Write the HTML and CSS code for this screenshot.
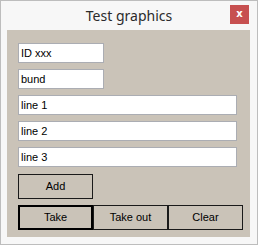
FILE: index.html
```html
<!DOCTYPE html>
<html>
<head>
<meta charset="utf-8">
<link rel="stylesheet" href="styles.css">
</head>
<body>
<div class="window">
  <div class="titlebar">
    <span class="title">Test graphics</span>
    <span class="close">x</span>
  </div>
  <div class="client">
    <div class="field short">ID xxx</div>
    <div class="field short">bund</div>
    <div class="field long">line 1</div>
    <div class="field long">line 2</div>
    <div class="field long">line 3</div>
    <div class="btn add">Add</div>
    <div class="row">
      <div class="btn default">Take</div>
      <div class="btn">Take out</div>
      <div class="btn">Clear</div>
    </div>
  </div>
</div>
</body>
</html>
```
FILE: styles.css
```css
html, body {
  margin: 0;
  padding: 0;
  background: #ffffff;
}
.window {
  box-sizing: border-box;
  width: 258px;
  height: 245px;
  border: 1px solid #bdbdbd;
  background: #f7f7f7;
  display: flex;
  flex-direction: column;
}
.titlebar {
  position: relative;
  height: 29px;
  display: flex;
  align-items: center;
  justify-content: center;
}
.title {
  font-family: "Noto Sans", "Open Sans", sans-serif;
  font-size: 14px;
  color: #2b2b2b;
  margin-top: -1px;
}
.close {
  position: absolute;
  left: 229px;
  top: 4px;
  width: 19px;
  height: 19px;
  background: #c75050;
  color: #ffffff;
  font-family: "DejaVu Sans", sans-serif;
  font-weight: bold;
  font-size: 10px;
  line-height: 18px;
  text-align: center;
}
.client {
  margin-left: 6px;
  width: 243px;
  height: 207px;
  box-sizing: border-box;
  background: #cac3b8;
  padding: 13px 0 0 11px;
  display: flex;
  flex-direction: column;
  align-items: flex-start;
  gap: 6px;
  font-family: "Liberation Sans", Arial, sans-serif;
  font-size: 11px;
  color: #000;
}
.field {
  box-sizing: border-box;
  height: 20px;
  background: #ffffff;
  border: 1px solid #abadb3;
  padding-left: 2px;
  line-height: 18px;
}
.field.short { width: 86px; }
.field.long { width: 219px; }
.btn {
  box-sizing: border-box;
  width: 75px;
  height: 25px;
  border: 1px solid #1a1a1a;
  text-align: center;
  line-height: 23px;
}
.btn.add { margin-top: 1px; }
.btn.default {
  border: 2px solid #000;
  line-height: 21px;
}
.row {
  display: flex;
}
```
